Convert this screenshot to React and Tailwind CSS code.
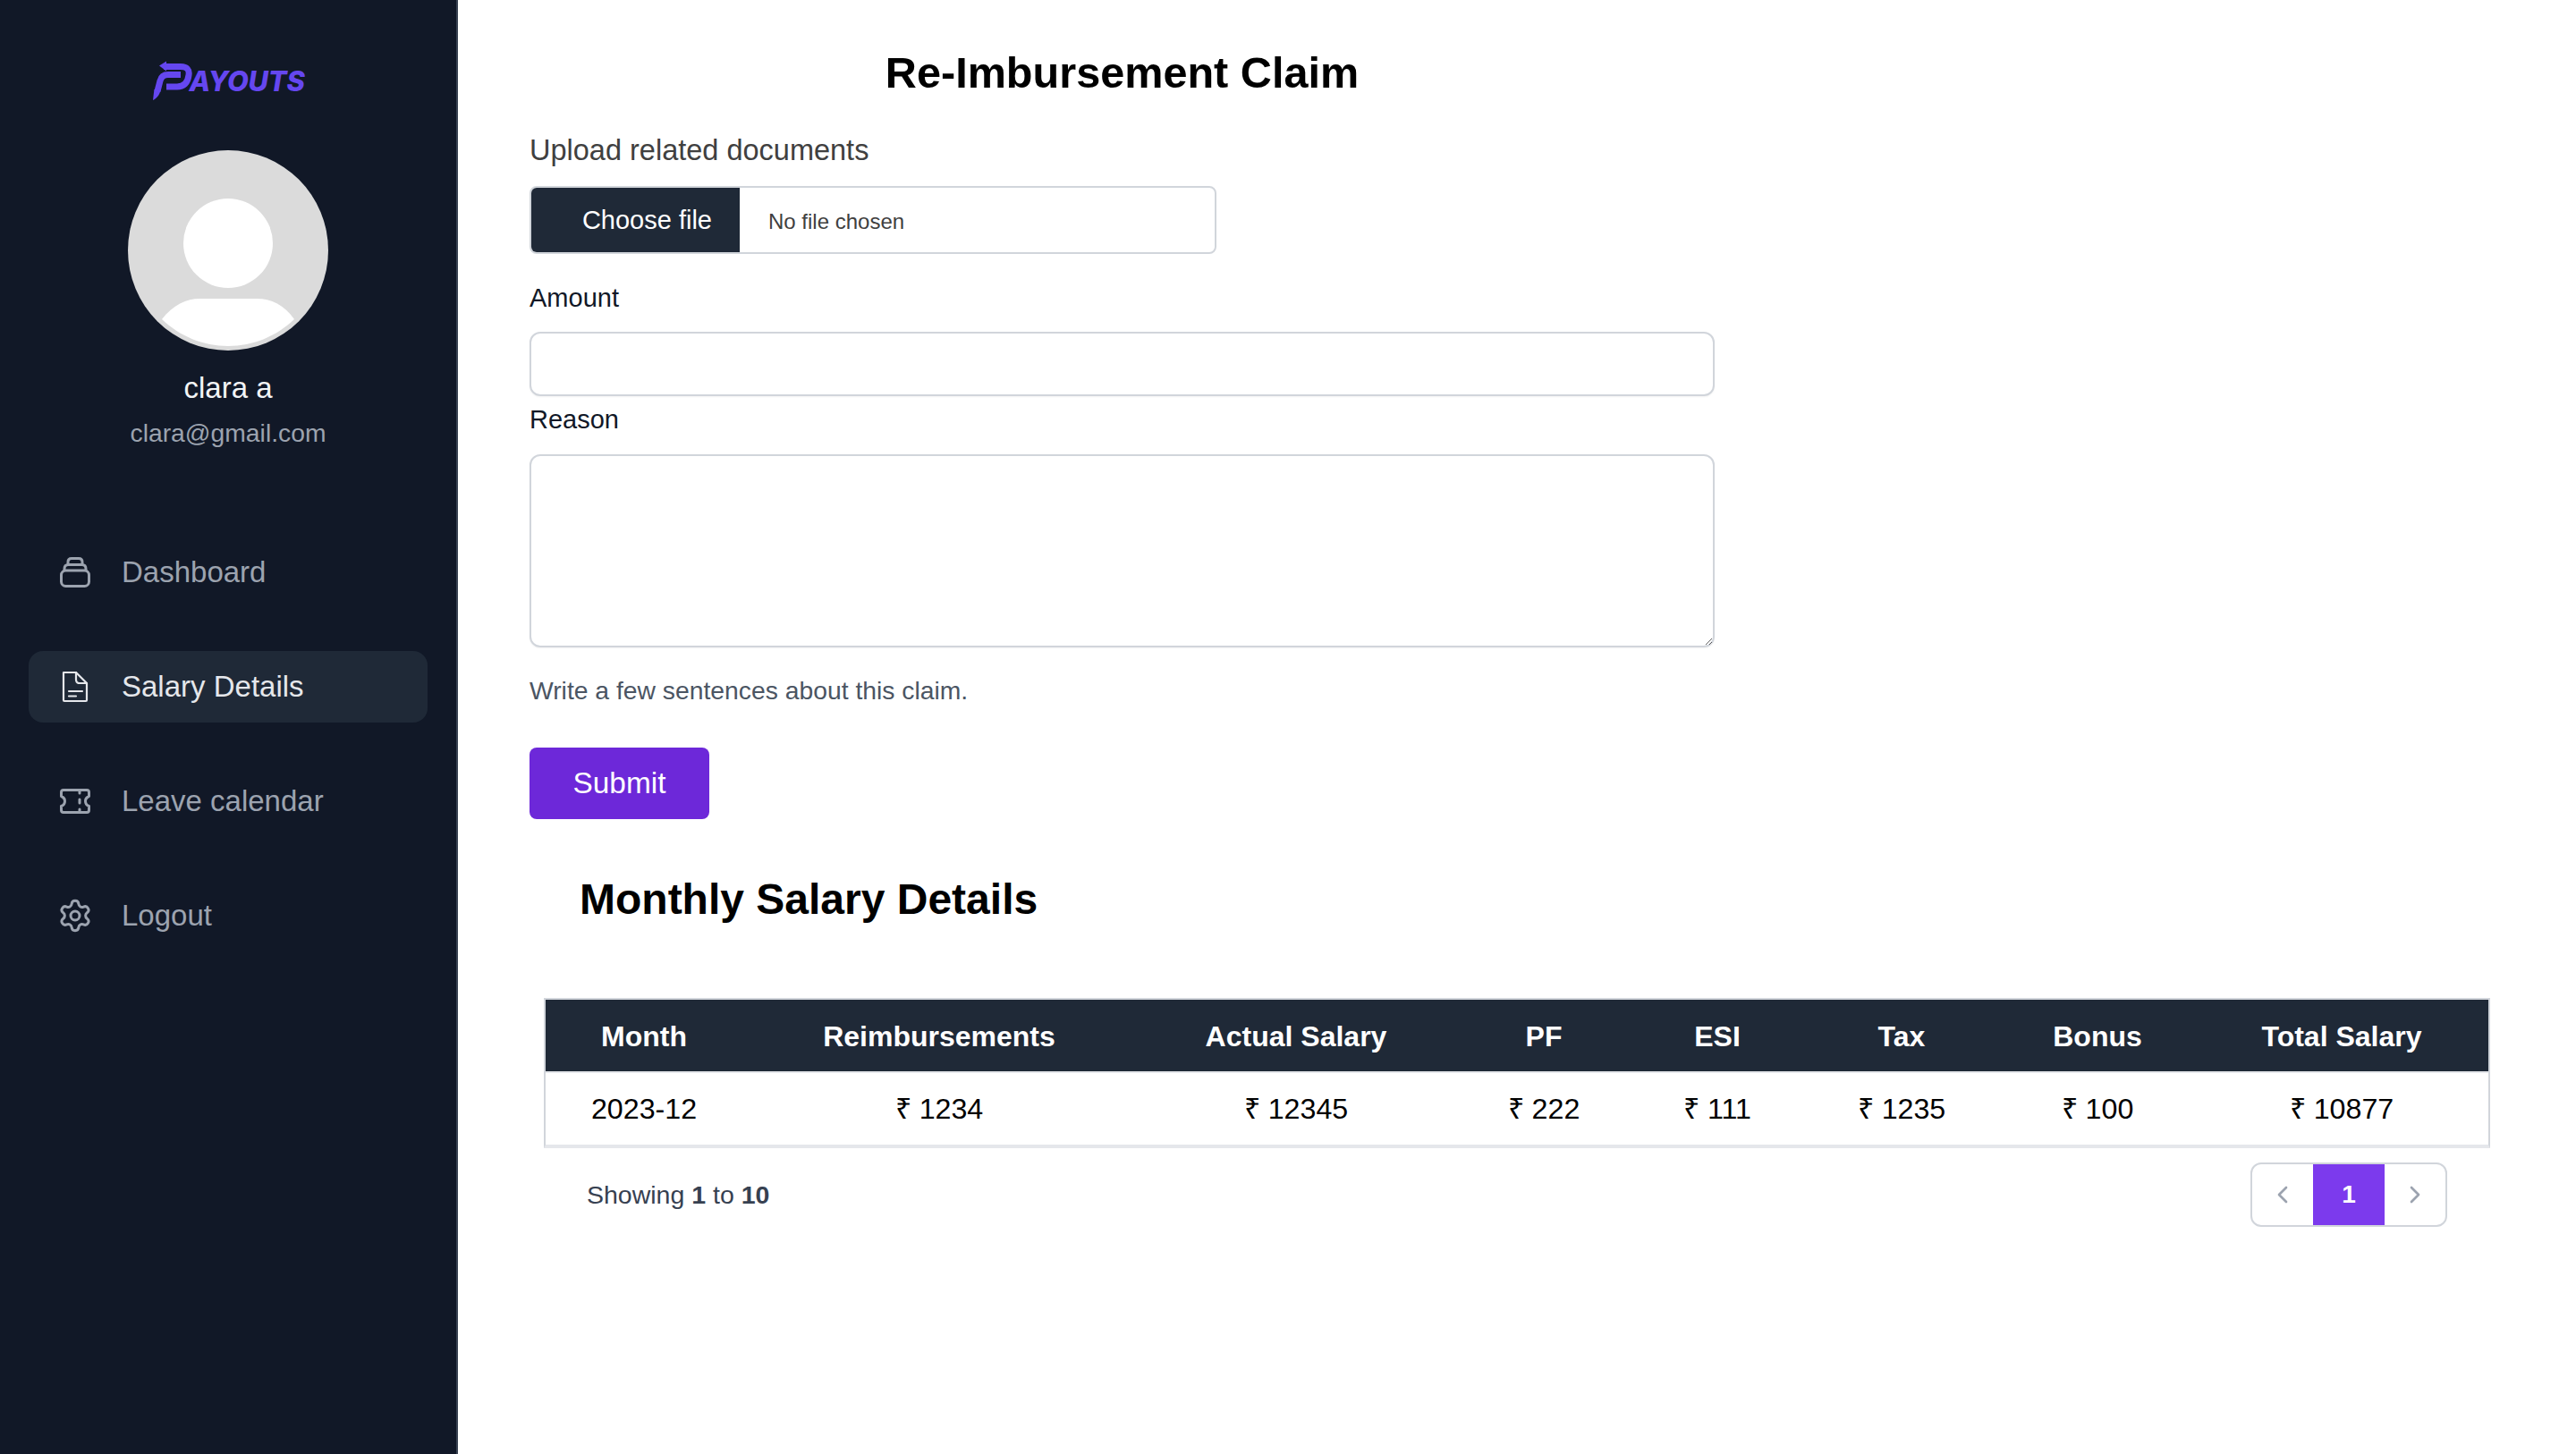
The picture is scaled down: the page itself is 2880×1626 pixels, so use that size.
import React from "react";
import { ChevronLeft, ChevronRight, Settings } from "lucide-react";

const font = { fontFamily: '"Liberation Sans", Arial, sans-serif' };

function Logo() {
  return (
    <div className="flex items-start justify-center h-[48px] w-[176px]">
      <svg width="46" height="46" viewBox="0 0 46 46" fill="none" className="shrink-0">
        <path d="M9 7.5 L17 2.5 V13.5 Z" fill="#6547f0" />
        <path d="M14 8.5 H33 C40 8.5 43 12 42 18 C41 27 36 31 29 31 H17" stroke="#6547f0" strokeWidth="7" strokeLinejoin="round" />
        <path d="M33 17.5 H19 C14 17.5 11 20 10 24.5 L7 36" stroke="#6547f0" strokeWidth="7" />
        <path d="M3.4 34 L10.5 35 C9.5 40 6 44 2 46 Z" fill="#6547f0" />
      </svg>
      <span className="text-[30.8px] leading-[34px] font-extrabold italic text-[#6547f0] -ml-[4px] mt-[8px] tracking-[-0.2px]" style={{ fontFamily: 'Inter, sans-serif' }}>AYOUTS</span>
    </div>
  );
}

function Avatar() {
  return (
    <div className="relative w-[224px] h-[224px] rounded-full bg-[#dbdbdb] overflow-hidden">
      <div className="absolute left-[62px] top-[54px] w-[100px] h-[100px] rounded-full bg-white" />
      <svg className="absolute inset-0" width="224" height="224" viewBox="0 0 224 224">
        <path d="M38 189 C50 173 66 166 80 166 H144 C160 166 175 173 186 189 C166 208 140 219 112 219 C84 219 58 208 38 189 Z" fill="#fff" />
      </svg>
    </div>
  );
}

function DashIcon() {
  return (
    <svg width="34" height="34" viewBox="0 0 34 34" fill="none" stroke="currentColor" strokeWidth="3" strokeLinejoin="round" className="shrink-0">
      <rect x="1.5" y="15" width="31" height="17.5" rx="5" />
      <path d="M5 15 V13 C5 10 6.5 8.5 9.5 8.5 H24.5 C27.5 8.5 29 10 29 13 V15" />
      <path d="M9 8.5 V5.5 C9 3 10.5 1.5 13 1.5 H21 C23.5 1.5 25 3 25 5.5 V8.5" />
    </svg>
  );
}

function DocIcon() {
  return (
    <svg width="34" height="36" viewBox="0 0 34 36" fill="none" stroke="currentColor" strokeWidth="2.2" strokeLinejoin="round" strokeLinecap="round" className="shrink-0">
      <path d="M4 2 H18 L30 14 V33 C30 33.6 29.6 34 29 34 H5 C4.4 34 4 33.6 4 33 Z" />
      <path d="M18 2 V10 C18 12.5 19.5 14 22 14 H30" />
      <path d="M10 23 H25 M10 28.5 H18" />
    </svg>
  );
}

function TicketIcon() {
  return (
    <svg width="34" height="28" viewBox="0 0 34 28" fill="none" stroke="currentColor" strokeWidth="3" strokeLinejoin="round" strokeLinecap="round" className="shrink-0">
      <path d="M4 1.5 H30 C31.5 1.5 32.5 2.5 32.5 4 V8.5 C30 9.5 28.5 11.5 28.5 14 C28.5 16.5 30 18.5 32.5 19.5 V24 C32.5 25.5 31.5 26.5 30 26.5 H4 C2.5 26.5 1.5 25.5 1.5 24 V19.5 C4 18.5 5.5 16.5 5.5 14 C5.5 11.5 4 9.5 1.5 8.5 V4 C1.5 2.5 2.5 1.5 4 1.5 Z" />
      <path d="M22 3 V5 M22 12 V16 M22 23 V25" />
    </svg>
  );
}

function NavItem({ icon, label, active }) {
  return (
    <div className={`flex items-center h-[80px] rounded-[16px] pl-[35px] ${active ? "bg-[#1f2937] text-[#e5e7eb]" : "text-[#9ca3af]"}`}>
      <span className="w-[34px] h-[36px] flex items-center justify-center shrink-0">{icon}</span>
      <span className="ml-[35px] text-[33px] leading-[48px]">{label}</span>
    </div>
  );
}

const headers = ["Month", "Reimbursements", "Actual Salary", "PF", "ESI", "Tax", "Bonus", "Total Salary"];
const cells = ["2023-12", "₹ 1234", "₹ 12345", "₹ 222", "₹ 111", "₹ 1235", "₹ 100", "₹ 10877"];
const widths = [220, 440, 358, 196, 192, 220, 218, 328];

export default function App() {
  return (
    <div className="flex min-h-[1626px] bg-white" style={font}>
      <aside className="w-[512px] shrink-0 bg-[#111827] border-r-2 border-[#374151] flex flex-col">
        <div className="flex flex-col items-center pt-[66px]">
          <Logo />
          <div className="mt-[54px]"><Avatar /></div>
          <p className="mt-[20px] text-[33px] leading-[44px] text-[#f3f4f6]">clara a</p>
          <p className="mt-[8px] text-[28.3px] leading-[40px] text-[#9ca3af]">clara@gmail.com</p>
        </div>
        <nav className="mt-[96px] mx-[32px] flex flex-col gap-[48px]">
          <NavItem icon={<DashIcon />} label="Dashboard" />
          <NavItem icon={<DocIcon />} label="Salary Details" active />
          <NavItem icon={<TicketIcon />} label="Leave calendar" />
          <NavItem icon={<Settings size={40} strokeWidth={1.8} className="shrink-0" />} label="Logout" />
        </nav>
      </aside>

      <main className="flex-1 min-w-0 pl-[80px]">
        <section className="w-[1325px] pt-[50px]">
          <h1 className="text-center text-[48.6px] leading-[62px] font-bold text-black">Re-Imbursement Claim</h1>
          <p className="mt-[34px] text-[32.5px] leading-[44px] text-[#404040]">Upload related documents</p>
          <div className="mt-[18px] w-[768px] h-[76px] flex items-stretch rounded-[8px] border-2 border-[#d1d5db] overflow-hidden">
            <span className="w-[233px] bg-[#1f2937] text-white text-[29px] flex items-center justify-end pr-[31px] pt-[2px]">Choose file</span>
            <span className="ml-[32px] text-[24px] text-[#404040] flex items-center pt-[4px]">No file chosen</span>
          </div>
          <label className="block mt-[29px] text-[29px] leading-[40px] text-[#111827]">Amount</label>
          <input className="block mt-[18px] w-full h-[72px] rounded-[12px] border-2 border-[#d1d5db] bg-white shadow-xs" aria-label="Amount" />
          <label className="block mt-[6px] text-[29px] leading-[40px] text-[#111827]">Reason</label>
          <textarea className="block mt-[19px] w-full h-[216px] rounded-[12px] border-2 border-[#d1d5db] bg-white shadow-xs" aria-label="Reason" />
          <p className="mt-[28px] text-[28.3px] leading-[40px] text-[#4b5563]">Write a few sentences about this claim.</p>
          <button className="block mt-[44px] w-[201px] h-[80px] rounded-[8px] bg-[#6d28d9] text-white text-[33.4px]">Submit</button>
        </section>

        <h2 className="mt-[59px] ml-[56px] text-[48px] leading-[62px] font-bold text-black">Monthly Salary Details</h2>

        <div className="mt-[79px] ml-[16px] w-[2176px] border-2 border-b-4 border-[#d1d5db] border-b-[#e5e7eb]">
          <table className="w-full table-fixed border-collapse">
            <colgroup>
              {widths.map((w, i) => <col key={i} style={{ width: w }} />)}
            </colgroup>
            <thead>
              <tr className="bg-[#1f2937] h-[81px]">
                {headers.map((h) => (
                  <th key={h} className="text-center text-[32px] font-bold text-white p-0 pt-[2px]">{h}</th>
                ))}
              </tr>
            </thead>
            <tbody>
              <tr className="h-[81px] border-t-2 border-[#e5e7eb]">
                {cells.map((c, i) => (
                  <td key={i} className="text-center text-[32.2px] text-black p-0 pt-[1px]">{c}</td>
                ))}
              </tr>
            </tbody>
          </table>
        </div>

        <div className="ml-[16px] w-[2128px] flex items-center justify-between mt-[16px] pl-[48px]">
          <p className="text-[28.5px] text-[#374151]">Showing <b className="font-bold">1</b> to <b className="font-bold">10</b></p>
          <div className="flex h-[72px] w-[220px] rounded-[12px] border-2 border-[#d1d5db] overflow-hidden items-stretch">
            <span className="w-[68px] flex items-center justify-center text-[#9ca3af]"><ChevronLeft size={32} strokeWidth={2} /></span>
            <span className="w-[80px] -my-[2px] bg-[#7c3aed] text-white font-bold text-[28px] flex items-center justify-center">1</span>
            <span className="flex-1 flex items-center justify-center text-[#9ca3af]"><ChevronRight size={32} strokeWidth={2} /></span>
          </div>
        </div>
      </main>
    </div>
  );
}
